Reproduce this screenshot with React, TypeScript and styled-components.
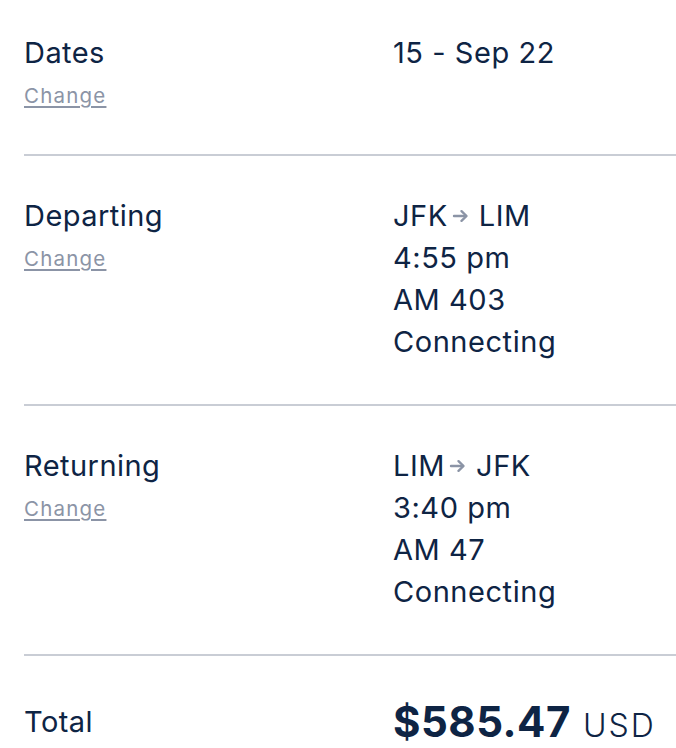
import React from "react";
import styled, { createGlobalStyle } from "styled-components";

const Global = createGlobalStyle`
  html, body { margin: 0; padding: 0; background: #ffffff; }
  body { font-family: Inter, "Open Sans", sans-serif; color: #0e2444; -webkit-font-smoothing: antialiased; }
`;

const Page = styled.div`
  padding-left: 24px;
  width: 652px;
  overflow: hidden;
`;

const Row = styled.section<{ $top: number; $bottom: number; $last?: boolean }>`
  display: grid;
  grid-template-columns: 369px 1fr;
  padding: ${(p) => p.$top}px 0 ${(p) => p.$bottom}px;
  border-bottom: ${(p) => (p.$last ? "none" : "2px solid #c9cdd5")};
  align-items: ${(p) => (p.$last ? "center" : "start")};
`;

const LabelCol = styled.div`
  display: flex;
  flex-direction: column;
`;

const Label = styled.div`
  font-size: 29px;
  line-height: 42px;
  letter-spacing: 0.45px;
  font-weight: 400;
`;

const ChangeLink = styled.a`
  font-size: 20.5px;
  line-height: 43px;
  letter-spacing: 1.2px;
  color: #8b94a6;
  text-decoration: underline;
  text-underline-offset: 3px;
  text-decoration-thickness: 1.5px;
  cursor: pointer;
`;

const ValueCol = styled.div`
  display: flex;
  flex-direction: column;
`;

const Value = styled.div`
  font-size: 29px;
  line-height: 42px;
  letter-spacing: 0.55px;
  display: flex;
  align-items: center;
`;

const Arrow = styled.svg`
  width: 20px;
  height: 16px;
  margin: 0 7px 0 4px;
`;

const Price = styled.div`
  display: flex;
  align-items: baseline;
  gap: 12px;
`;

const Amount = styled.span`
  font-size: 42px;
  font-weight: 700;
  letter-spacing: 0.5px;
`;

const Currency = styled.span`
  font-size: 32px;
  font-weight: 300;
  letter-spacing: 2px;
`;

const RouteArrow = () => (
  <Arrow viewBox="0 0 20 16">
    <path d="M2 8h12" stroke="#8b94a6" strokeWidth="2.4" strokeLinecap="round" />
    <path d="M9.5 3.2L14.5 8L9.5 12.8" fill="none" stroke="#8b94a6" strokeWidth="2.4" strokeLinecap="round" strokeLinejoin="round" />
  </Arrow>
);

const legs = [
  { label: "Departing", from: "JFK", to: "LIM", time: "4:55 pm", flight: "AM 403", type: "Connecting" },
  { label: "Returning", from: "LIM", to: "JFK", time: "3:40 pm", flight: "AM 47", type: "Connecting" },
];

export default function App() {
  return (
    <>
      <Global />
      <Page>
        <Row $top={32} $bottom={37}>
          <LabelCol>
            <Label>Dates</Label>
            <ChangeLink>Change</ChangeLink>
          </LabelCol>
          <ValueCol>
            <Value>15 - Sep 22</Value>
          </ValueCol>
        </Row>
        {legs.map((l) => (
          <Row key={l.label} $top={39} $bottom={41}>
            <LabelCol>
              <Label>{l.label}</Label>
              <ChangeLink>Change</ChangeLink>
            </LabelCol>
            <ValueCol>
              <Value>
                {l.from}
                <RouteArrow />
                {l.to}
              </Value>
              <Value>{l.time}</Value>
              <Value>{l.flight}</Value>
              <Value>{l.type}</Value>
            </ValueCol>
          </Row>
        ))}
        <Row $last $top={40} $bottom={0}>
          <LabelCol>
            <Label>Total</Label>
          </LabelCol>
          <Price>
            <Amount>$585.47</Amount>
            <Currency>USD</Currency>
          </Price>
        </Row>
      </Page>
    </>
  );
}
